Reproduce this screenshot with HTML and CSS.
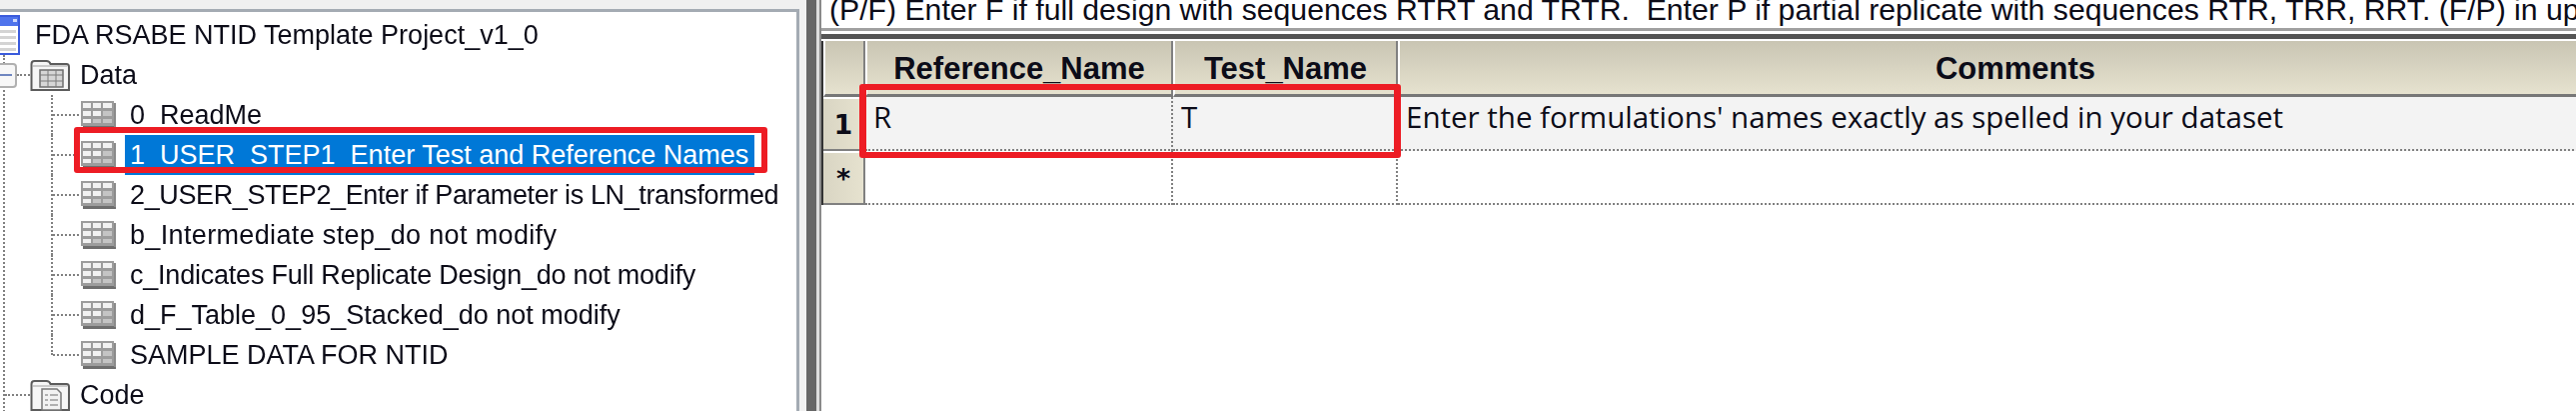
FILE: index.html
```html
<!DOCTYPE html>
<html lang="en">
<head>
  <meta charset="UTF-8">
  <title>FDA RSABE NTID Template Project</title>
  <link rel="stylesheet" href="styles.css">
</head>
<body>
  <svg class="defs" width="0" height="0">
    <symbol id="table" viewBox="0 0 35 28">
      <rect x="2" y="23" width="33" height="5" fill="#6e6e6e"/>
      <rect x="33" y="2" width="2" height="24" fill="#8a8a8a"/>
      <rect x="0" y="0" width="33" height="25" fill="#9c9c9c"/>
      <g fill="#f2f2f2">
        <rect x="2" y="2" width="8" height="5"/><rect x="12" y="2" width="8" height="5"/><rect x="22" y="2" width="9" height="5"/>
        <rect x="2" y="10" width="8" height="5"/><rect x="12" y="10" width="8" height="5"/>
        <rect x="2" y="18" width="8" height="4"/>
      </g>
      <g fill="#c4c4c4">
        <rect x="22" y="10" width="9" height="5"/>
        <rect x="12" y="18" width="8" height="4"/><rect x="22" y="18" width="9" height="4"/>
      </g>
    </symbol>
    <symbol id="folder" viewBox="0 0 40 32">
      <path d="M1.500 31V5q0-3 3-3h12q3 0 4 3h16q2.500 0 2.500 3v23z" fill="#f6f6f6" stroke="#5c5c5c" stroke-width="2"/>
      <path d="M3 7h34" stroke="#bdbdbd" stroke-width="1.500"/>
    </symbol>
  </svg>

  <div class="tree-pane">
    <div class="tree">
      <div class="row">
        <svg class="root-icon" viewBox="0 0 20 40">
          <rect x="-4" y="1" width="23" height="38" fill="#fff" stroke="#3a5bdc" stroke-width="2"/>
          <rect x="-3" y="2" width="21" height="9" fill="#4f74ec"/>
          <rect x="13" y="4" width="4" height="3" fill="#cfd9fb"/>
          <g fill="#d4d4d4">
            <rect x="0" y="15" width="16" height="3"/>
            <rect x="0" y="21" width="16" height="3"/>
            <rect x="0" y="27" width="16" height="3"/>
            <rect x="0" y="33" width="16" height="3"/>
          </g>
        </svg>
        <span class="label root-label">FDA RSABE NTID Template Project_v1_0</span>
      </div>

      <div class="branch">
        <div class="row">
          <span class="toggle"><i></i></span>
          <span class="stem short"></span>
          <svg class="folder-icon"><use href="#folder"/>
            <rect x="10" y="11" width="23" height="17" fill="#d6d6d6" stroke="#6e6e6e" stroke-width="1.500"/>
            <path d="M10 16h23M10 22h23M18 11v17M26 11v17" stroke="#7a7a7a" stroke-width="1"/>
          </svg>
          <span class="label">Data</span>
        </div>

        <div class="leaves">
          <div class="row leaf">
            <span class="stem"></span>
            <svg class="table-icon"><use href="#table"/></svg>
            <span class="label">0_ReadMe</span>
          </div>
          <div class="row leaf selected">
            <span class="stem"></span>
            <svg class="table-icon"><use href="#table"/></svg>
            <span class="label">1_USER_STEP1_Enter Test and Reference Names</span>
            <span class="callout callout-tree"></span>
          </div>
          <div class="row leaf">
            <span class="stem"></span>
            <svg class="table-icon"><use href="#table"/></svg>
            <span class="label tighter">2_USER_STEP2_Enter if Parameter is LN_transformed</span>
          </div>
          <div class="row leaf">
            <span class="stem"></span>
            <svg class="table-icon"><use href="#table"/></svg>
            <span class="label wider">b_Intermediate step_do not modify</span>
          </div>
          <div class="row leaf">
            <span class="stem"></span>
            <svg class="table-icon"><use href="#table"/></svg>
            <span class="label tight">c_Indicates Full Replicate Design_do not modify</span>
          </div>
          <div class="row leaf">
            <span class="stem"></span>
            <svg class="table-icon"><use href="#table"/></svg>
            <span class="label">d_F_Table_0_95_Stacked_do not modify</span>
          </div>
          <div class="row leaf last">
            <span class="stem"></span>
            <svg class="table-icon"><use href="#table"/></svg>
            <span class="label">SAMPLE DATA FOR NTID</span>
          </div>
        </div>

        <div class="row">
          <span class="stem code-stem"></span>
          <svg class="folder-icon"><use href="#folder"/>
            <path d="M12 31V10h15l4 4v17z" fill="#f2f2f2" stroke="#777" stroke-width="1.500"/>
            <path d="M15 16h3M20 16h8M15 21h3M20 21h8M15 26h3M20 26h8" stroke="#9a9a9a" stroke-width="1.500"/>
          </svg>
          <span class="label">Code</span>
        </div>
      </div>
    </div>
  </div>

  <div class="splitter"></div>

  <div class="main-pane">
    <div class="main">
      <div class="prompt">(P/F) Enter F if full design with sequences RTRT and TRTR.  Enter P if partial replicate with sequences RTR, TRR, RRT. (F/P) in upper case</div>
      <div class="bar"></div>
      <div class="grid">
        <div class="corner"></div>
        <div class="head">Reference_Name</div>
        <div class="head">Test_Name</div>
        <div class="head">Comments</div>

        <div class="row-head current">1</div>
        <div class="cell current">R</div>
        <div class="cell current">T</div>
        <div class="cell current">Enter the formulations' names exactly as spelled in your dataset</div>

        <div class="row-head new">*</div>
        <div class="cell"></div>
        <div class="cell"></div>
        <div class="cell"></div>

        <span class="callout callout-grid"></span>
      </div>
    </div>
  </div>
</body>
</html>
```

FILE: styles.css
```css
html, body {
  margin: 0;
  height: 100%;
  overflow: hidden;
}

body {
  display: flex;
  background-color: #f0f0f0;
  color: #0c0c18;
  font-family: 'Liberation Sans', sans-serif;
  font-size: 27px;
  filter: blur(0.5px); /* the screenshot was scaled up, nothing in it is sharp */
}

.defs {
  position: absolute;
}

/* left side, the project tree */
.tree-pane {
  width: 807px;
  flex: none;
  padding-top: 9px;
  box-sizing: border-box;
  padding-right: 7px;
}

.tree {
  height: 100%;
  box-sizing: border-box;
  padding-top: 3px;
  background-color: #fff;
  border-top: 3px solid #a4abb3;
  border-right: 3px solid #a4abb3;
}

.row {
  height: 40px;
  display: flex;
  align-items: center;
  position: relative;
}

.label {
  white-space: pre;
  line-height: 40px;
}

.root-icon {
  width: 20px;
  height: 40px;
  flex: none;
}

.root-label {
  margin-left: 15px;
}

.branch {
  margin-left: 3px;
  border-left: 2px dotted #808080;
}

.toggle {
  width: 15px;
  height: 21px;
  margin-left: -5px;
  flex: none;
  display: flex;
  align-items: center;
  background-color: #f7f7f7;
  border: 2px solid #b0b0b0;
  border-left: none;
  border-radius: 0 4px 4px 0;
}

.toggle i {
  width: 12px;
  height: 2px;
  background-color: #6f86c0;
}

.stem {
  width: 26px;
  flex: none;
  border-top: 2px dotted #808080;
}

.stem.short {
  width: 13px;
}

.stem.code-stem {
  width: 25px;
}

.folder-icon {
  width: 40px;
  height: 32px;
  flex: none;
  margin-right: 10px;
}

.leaves {
  margin-left: 46px;
}

.leaf {
  border-left: 2px dotted #808080;
}

.leaf.last {
  border-left-color: transparent;
}

.leaf.last::before {
  content: "";
  position: absolute;
  left: -2px;
  top: 0;
  height: 20px;
  border-left: 2px dotted #808080;
}

.table-icon {
  width: 35px;
  height: 28px;
  flex: none;
  margin-left: 2px;
  margin-right: 9px;
}

.leaf .label {
  padding-left: 5px;
}

/* the original font was hinted, so some rows run narrower or wider */
.leaf .tighter {
  letter-spacing: -0.38px;
}

.leaf .tight {
  letter-spacing: -0.22px;
}

.leaf .wider {
  letter-spacing: 0.35px;
}

.selected .label {
  background-color: #0078d7;
  color: #fff;
  padding-right: 6px;
}

/* the red boxes somebody drew over the screenshot */
.callout {
  position: absolute;
  box-sizing: border-box;
  border: 6px solid #ed1c24;
  border-radius: 3px;
}

.callout-tree {
  left: 21px;
  top: -8px;
  width: 694px;
  height: 46px;
}

.callout-grid {
  left: 36px;
  top: 43px;
  width: 542px;
  height: 74px;
  border-width: 6px 7px;
}

.splitter {
  width: 10px;
  flex: none;
  background-color: #666;
}

/* right side, the datasheet */
.main-pane {
  flex: 1;
  min-width: 0;
  border-left: 3px solid #ddd;
}

.main {
  height: 100%;
  background-color: #fff;
  border-left: 2px solid #8a8a8a;
  overflow: hidden;
}

.prompt {
  height: 28px;
  padding-left: 8px;
  font-size: 30.2px;
  line-height: 20px;
  white-space: pre;
  overflow: hidden;
  border-bottom: 3px solid #a0a0a0;
}

.bar {
  height: 5px;
  margin: 3px 0 2px;
  background-color: #555;
}

.grid {
  display: grid;
  grid-template-columns: 42px 308px 225px 1236px;
  grid-template-rows: 56px 54px 54px;
  width: max-content;
  position: relative;
  border-left: 2px solid #333;
}

.corner, .head {
  background: linear-gradient(#c9c5b3, #e6e2cf);
  border-left: 2px solid #fff;
  border-right: 2px solid #808080;
  border-bottom: 3px solid #777;
  box-sizing: border-box;
}

.head {
  display: flex;
  align-items: center;
  justify-content: center;
  padding-top: 2px;
  font-size: 31px;
  font-weight: bold;
}

.row-head {
  display: flex;
  align-items: center;
  justify-content: center;
  background: linear-gradient(to right, #d9d5c3, #e6e2cf);
  border-right: 2px solid #808080;
  border-bottom: 2px solid #808080;
  border-top: 2px solid #fff;
  box-sizing: border-box;
  font-family: 'DejaVu Sans', sans-serif;
  font-weight: bold;
}

.cell {
  padding-left: 8px;
  box-sizing: border-box;
  font-family: 'Open Sans', sans-serif;
  font-size: 29.5px;
  line-height: 40px;
  white-space: nowrap;
  border-right: 2px dotted #808080;
  border-bottom: 2px dotted #808080;
}

.cell.current {
  background-color: #f3f3f3;
}
```
